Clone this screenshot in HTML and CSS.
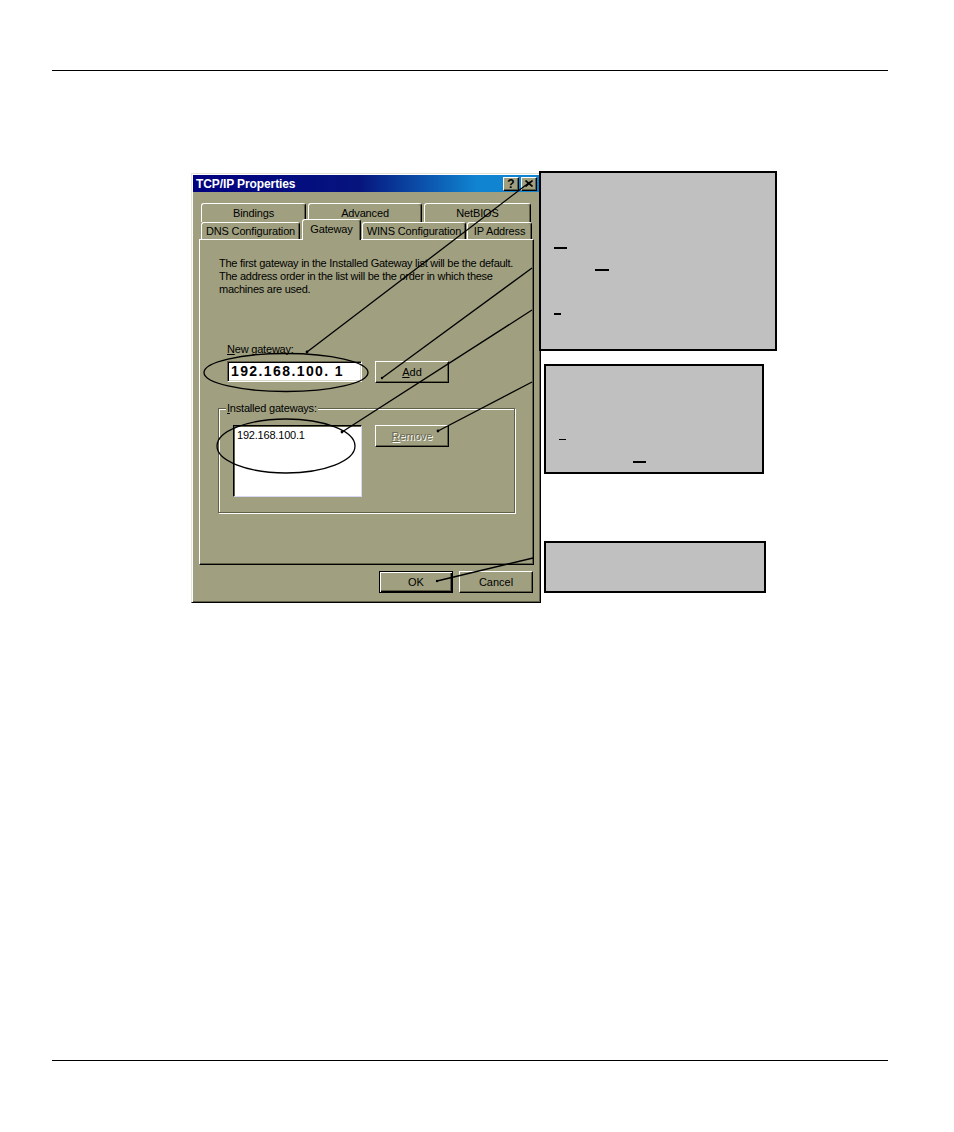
FILE: index.html
```html
<!DOCTYPE html>
<html>
<head>
<meta charset="utf-8">
<link rel="stylesheet" href="styles.css">
</head>
<body>
<div class="page">
  <div class="rule rule-top"></div>
  <div class="figure">
    <div class="dialog">
      <div class="titlebar">
        <span class="title">TCP/IP Properties</span>
        <span class="tbtns">
          <span class="tbtn">?</span>
          <span class="tbtn"><svg width="8" height="7" viewBox="0 0 8 7"><path d="M0.5 0.5 L7.5 6.5 M7.5 0.5 L0.5 6.5" stroke="#000" stroke-width="1.6" fill="none"/></svg></span>
        </span>
      </div>
      <div class="body">
        <div class="tabrow tabrow-back">
          <div class="tab t-bind">Bindings</div>
          <div class="tab t-adv">Advanced</div>
          <div class="tab t-net">NetBIOS</div>
        </div>
        <div class="tabrow tabrow-front">
          <div class="tab t-dns">DNS Configuration</div>
          <div class="tab t-gw selected">Gateway</div>
          <div class="tab t-wins">WINS Configuration</div>
          <div class="tab t-ip">IP Address</div>
        </div>
        <div class="panel">
          <div class="intro">The first gateway in the Installed Gateway list will be the default.<br>The address order in the list will be the order in which these<br>machines are used.</div>
          <div class="lbl-new"><u>N</u>ew gateway:</div>
          <div class="gw-row">
            <div class="ipbox">192.168.100. 1</div>
            <div class="btn btn-add"><u>A</u>dd</div>
          </div>
          <div class="group">
            <div class="legend"><u>I</u>nstalled gateways:</div>
            <div class="group-row">
              <div class="listbox">192.168.100.1</div>
              <div class="btn btn-remove disabled"><u>R</u>emove</div>
            </div>
          </div>
        </div>
        <div class="actions">
          <div class="btn default">OK</div>
          <div class="btn">Cancel</div>
        </div>
      </div>
    </div>

    <div class="callout c1">
      <span class="mark m1a"></span>
      <span class="mark m1b"></span>
      <span class="mark m1c"></span>
    </div>
    <div class="callout c2">
      <span class="mark m2a"></span>
      <span class="mark m2b"></span>
    </div>
    <div class="callout c3"></div>

    <svg class="overlay" width="954" height="430" viewBox="0 0 954 430">
      <g stroke="#000" stroke-width="1.3" fill="none">
        <ellipse cx="286" cy="199.5" rx="82" ry="19"/>
        <ellipse cx="286" cy="273" rx="69" ry="27"/>
        <line x1="307" y1="179" x2="530" y2="9"/>
        <line x1="382" y1="205" x2="532" y2="95"/>
        <line x1="342" y1="259" x2="532" y2="137"/>
        <line x1="438" y1="258" x2="532" y2="209"/>
        <line x1="437" y1="408" x2="533" y2="385"/>
      </g>
      <g fill="#000">
        <circle cx="307" cy="179" r="1.4"/>
        <circle cx="382" cy="205" r="1.2"/>
        <circle cx="342" cy="259" r="1.4"/>
        <circle cx="438" cy="258" r="1.4"/>
        <circle cx="437" cy="408" r="1.2"/>
      </g>
    </svg>
  </div>
  <div class="rule rule-bottom"></div>
</div>
</body>
</html>
```
FILE: styles.css
```css
* { box-sizing: border-box; }
body { margin: 0; background: #fff; font-family: "Liberation Sans", Arial, sans-serif; }
.page { width: 954px; height: 1132px; overflow: hidden; }
.rule { margin-left: 52px; width: 836px; height: 1px; background: #000; }
.rule-top { margin-top: 70px; }
.rule-bottom { margin-top: 457px; }
.figure { position: relative; margin-top: 102px; height: 430px; }

.dialog {
  margin-left: 191px; width: 350px; height: 430px;
  background: #a0a080;
  border: 1px solid; border-color: #e4e4d8 #000 #000 #e4e4d8;
  box-shadow: inset 1px 1px 0 #fff, inset -1px -1px 0 #606048;
  padding: 1px;
  font-family: "Liberation Sans", Arial, sans-serif;
  font-size: 11px; color: #000;
}
.titlebar {
  height: 17px; display: flex; align-items: center; justify-content: space-between;
  padding: 0 2px 0 3px;
  background: linear-gradient(90deg, #000080 0%, #06157e 48%, #1084d0 82%, #1084d0 100%);
}
.title { font-weight: bold; font-size: 12px; color: #fff; letter-spacing: -0.1px; }
.tbtns { display: flex; gap: 2px; }
.tbtn {
  width: 16px; height: 14px; background: #a0a080;
  border: 1px solid; border-color: #fff #000 #000 #fff;
  box-shadow: inset -1px -1px 0 #606048;
  display: flex; align-items: center; justify-content: center;
  font-weight: bold; font-size: 12px; line-height: 1;
}
.body { padding: 0 5px 0 6px; }
.tabrow { display: flex; margin-left: 2px; }
.tabrow-back { margin-top: 11px; height: 19px; }
.tabrow-front { height: 17px; align-items: flex-end; }
.tab {
  height: 100%; text-align: center;
  border-top: 1px solid #fff; border-left: 1px solid #fff; border-right: 1px solid #000;
  box-shadow: inset -1px 0 0 #606048;
  border-radius: 3px 3px 0 0;
  display: flex; align-items: center; justify-content: center;
  background: #a0a080; white-space: nowrap; letter-spacing: -0.15px;
}
.tabrow-back .tab { padding-bottom: 1px; }
.t-bind { width: 105px; margin-right: 2px; }
.t-adv { width: 114px; margin-right: 2px; }
.t-net { width: 107px; }
.t-dns { width: 99px; margin-right: 2px; }
.t-gw { width: 59px; margin-right: 1px; }
.t-wins { width: 104px; margin-right: 1px; }
.t-ip { width: 65px; }
.tab.selected { height: 21px; margin-bottom: -1px; position: relative; z-index: 1; padding-bottom: 2px; }

.panel {
  height: 326px;
  border: 1px solid; border-color: #fff #000 #000 #fff;
  box-shadow: inset -1px -1px 0 #606048;
  display: flex; flex-direction: column; align-items: flex-start;
}
.intro { margin: 17px 0 0 19px; line-height: 13px; white-space: nowrap; letter-spacing: -0.26px; }
.lbl-new { margin: 47px 0 0 27px; line-height: 13px; letter-spacing: -0.2px; }
.gw-row { display: flex; align-items: flex-start; margin: 5px 0 0 27px; }
.ipbox {
  width: 135px; height: 21px; background: #fff;
  border: 1px solid; border-color: #606048 #fff #fff #606048;
  box-shadow: inset 1px 1px 0 #000, inset -1px -1px 0 #d8d8c8;
  font-weight: bold; font-size: 14px;
  letter-spacing: 1.4px; line-height: 19px; padding-left: 3px;
}
.btn {
  width: 74px; height: 22px; background: #a0a080;
  border: 1px solid; border-color: #fff #000 #000 #fff;
  box-shadow: inset -1px -1px 0 #606048;
  display: flex; align-items: center; justify-content: center;
}
.btn-add { margin-left: 13px; }
.btn.disabled { color: #686850; text-shadow: 1px 1px 0 #fff; }
.btn.default {
  border-color: #000;
  box-shadow: inset 1px 1px 0 #fff, inset -1px -1px 0 #000, inset -2px -2px 0 #606048;
}
.group {
  margin: 25px 0 0 18px; width: 297px; height: 105px;
  border: 1px solid #606048;
  box-shadow: 1px 1px 0 #fff, inset 1px 1px 0 #fff;
  display: flex; flex-direction: column; align-items: flex-start;
}
.legend { margin: -7px 0 0 7px; padding: 0 1px; background: #a0a080; line-height: 13px; letter-spacing: -0.2px; }
.group-row { display: flex; align-items: flex-start; margin: 10px 0 0 14px; }
.listbox {
  width: 129px; height: 72px; background: #fff;
  border: 1px solid; border-color: #000 #d8d8f4 #d8d8f4 #000;
  box-shadow: inset 1px 1px 0 #606048;
  padding: 3px 0 0 3px; line-height: 13px; letter-spacing: -0.2px;
}
.btn-remove { margin-left: 13px; }
.actions { display: flex; justify-content: flex-end; gap: 6px; margin-top: 6px; padding-right: 1px; }

.callout {
  position: absolute; background: #c0c0c0; border: 2px solid #000;
  display: flex; flex-direction: column; align-items: flex-start;
}
.c1 { left: 539px; top: -2px; width: 238px; height: 180px; }
.c2 { left: 544px; top: 191px; width: 220px; height: 110px; }
.c3 { left: 544px; top: 368px; width: 222px; height: 52px; }
.mark { display: block; background: #000; height: 2px; }
.m1a { margin: 74px 0 0 13px; width: 13px; }
.m1b { margin: 20px 0 0 54px; width: 14px; }
.m1c { margin: 42px 0 0 13px; width: 7px; }
.m2a { margin: 73px 0 0 13px; width: 7px; height: 1px; }
.m2b { margin: 21px 0 0 87px; width: 13px; }

.overlay { position: absolute; left: 0; top: 0; pointer-events: none; }
```
